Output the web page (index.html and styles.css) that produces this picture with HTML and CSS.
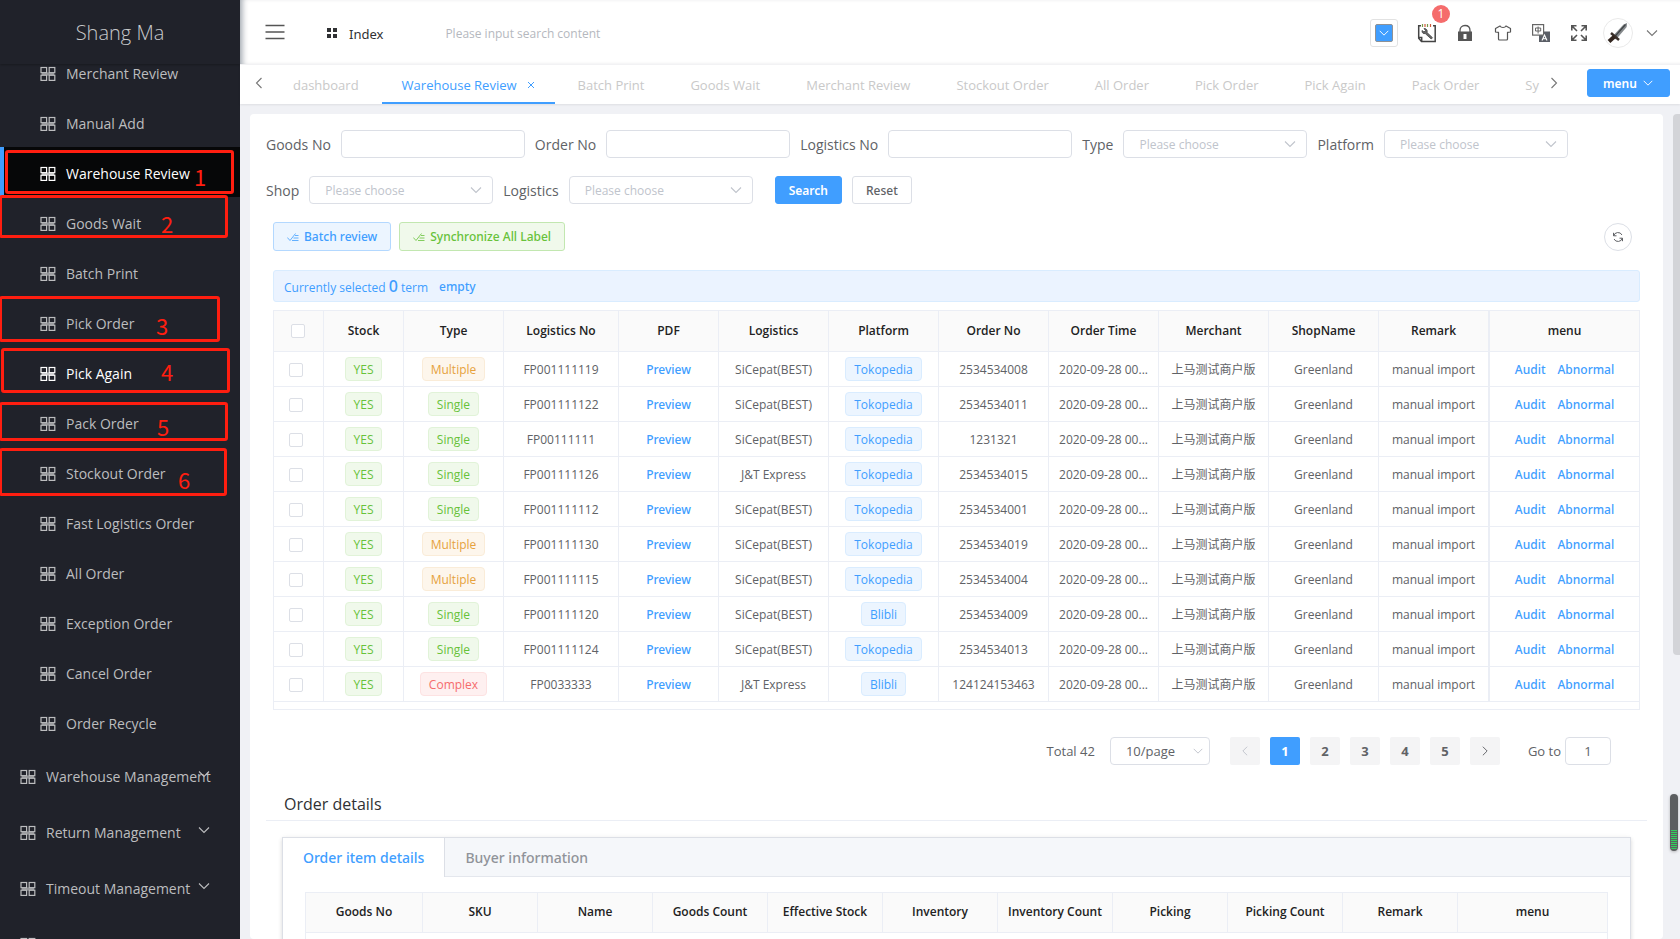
FILE: index.html
```html
<!DOCTYPE html>
<html lang="en">
<head>
<meta charset="utf-8">
<title>Warehouse Review</title>
<link rel="stylesheet" href="styles.css">
</head>
<body>
<svg class="sprite" aria-hidden="true">
  <symbol id="grid" viewBox="0 0 16 16"><g fill="none" stroke="currentColor" stroke-width="1.2"><rect x="1" y="1.5" width="5.6" height="5.2"/><rect x="9.2" y="1.5" width="5.6" height="5.2"/><rect x="1" y="9.2" width="5.6" height="5.2"/><rect x="9.2" y="9.2" width="5.6" height="5.2"/></g><path d="M1.6 6.4h12.600v3.200H1.600z" fill="currentColor" opacity=".7"/></symbol>
  <symbol id="down" viewBox="0 0 14 14"><path d="M2 4.500l5 5 5-5" fill="none" stroke="currentColor" stroke-width="1.100"/></symbol>
  <symbol id="left" viewBox="0 0 14 14"><path d="M9.500 2l-5 5 5 5" fill="none" stroke="currentColor" stroke-width="1.100"/></symbol>
  <symbol id="right" viewBox="0 0 14 14"><path d="M4.500 2l5 5-5 5" fill="none" stroke="currentColor" stroke-width="1.100"/></symbol>
  <symbol id="finished" viewBox="0 0 12 12"><path d="M.3 6.500l2.700 3L8.500 2.500M8 4.500h3.500M6.500 7h5M5 9.500h6.500" fill="none" stroke="currentColor" stroke-width=".8"/></symbol>
</svg>
<div class="app">
  <aside class="sidebar">
    <div class="logo">Shang Ma</div>
    <nav class="menu">
      <a class="item" href="#"><svg><use href="#grid"/></svg>Merchant Review</a>
      <a class="item" href="#"><svg><use href="#grid"/></svg>Manual Add</a>
      <a class="item current" href="#"><svg><use href="#grid"/></svg>Warehouse Review</a>
      <a class="item" href="#"><svg><use href="#grid"/></svg>Goods Wait</a>
      <a class="item" href="#"><svg><use href="#grid"/></svg>Batch Print</a>
      <a class="item" href="#"><svg><use href="#grid"/></svg>Pick Order</a>
      <a class="item hover" href="#"><svg><use href="#grid"/></svg>Pick Again</a>
      <a class="item" href="#"><svg><use href="#grid"/></svg>Pack Order</a>
      <a class="item" href="#"><svg><use href="#grid"/></svg>Stockout Order</a>
      <a class="item" href="#"><svg><use href="#grid"/></svg>Fast Logistics Order</a>
      <a class="item" href="#"><svg><use href="#grid"/></svg>All Order</a>
      <a class="item" href="#"><svg><use href="#grid"/></svg>Exception Order</a>
      <a class="item" href="#"><svg><use href="#grid"/></svg>Cancel Order</a>
      <a class="item" href="#"><svg><use href="#grid"/></svg>Order Recycle</a>
      <a class="item group" href="#"><svg><use href="#grid"/></svg>Warehouse Management<svg class="arrow"><use href="#down"/></svg></a>
      <a class="item group" href="#"><svg><use href="#grid"/></svg>Return Management<svg class="arrow"><use href="#down"/></svg></a>
      <a class="item group" href="#"><svg><use href="#grid"/></svg>Timeout Management<svg class="arrow"><use href="#down"/></svg></a>
      <a class="item group" href="#" aria-label="More"><svg><use href="#grid"/></svg></a>
    </nav>
    <div class="mark mark1"></div><span class="num num1">1</span>
    <div class="mark mark2"></div><span class="num num2">2</span>
    <div class="mark mark3"></div><span class="num num3">3</span>
    <div class="mark mark4"></div><span class="num num4">4</span>
    <div class="mark mark5"></div><span class="num num5">5</span>
    <div class="mark mark6"></div><span class="num num6">6</span>
  </aside>
  <div class="main">
    <header class="topbar">
      <button class="fold" aria-label="Collapse menu"><svg width="20" height="16" viewBox="0 0 20 16"><path d="M.5 1.500h19M.5 8h19M.5 14.500h19" stroke="#555" stroke-width="1.400"/></svg></button>
      <a class="index" href="#"><svg width="12" height="12" viewBox="0 0 12 12"><path d="M1 1h4v4H1zM7 1h4v4H7zM1 7h4v4H1zM7 7h4v4H7z" fill="#303133"/></svg>Index</a>
      <input class="top-search" type="text" placeholder="Please input search content" aria-label="Search content">
      <div class="tools">
        <button class="color" aria-label="Theme colour"><span><svg width="12" height="12"><use href="#down"/></svg></span></button>
        <button class="icon-btn log" aria-label="Debug log"><svg width="20" height="20" viewBox="0 0 20 20" fill="none" stroke="#444" stroke-width="1.500"><path d="M4 2.700H1.700v12.600L4.500 18.500h13.700V2.700H16M1.700 14.500h3v4"/><path d="M5.500 1v3M10.500 1v3" stroke="#7a9a4a" stroke-width="1.200"/><path d="M8 1v3M13.500 1v3" stroke="#d05a3a" stroke-width="1.200"/><path d="M7 5.500l1.500 2-1.500 1.500-2-1.500c-.3 2.500 1.500 3.500 3.200 3l6 5.500 1.300-1.300L10 9.500c.8-2-.5-4.200-3-4z" fill="#666" stroke-width=".8"/></svg><span class="badge">1</span></button>
        <button class="icon-btn" aria-label="Lock screen"><svg width="16" height="18" viewBox="0 0 16 18"><path d="M3 8V6.500C3 3.500 5 1.500 8 1.500s5 2 5 5V8" fill="none" stroke="#555" stroke-width="1.300"/><path fill="#555" fill-rule="evenodd" d="M1 7.500h14V16.500q0 .5-.5.500h-13q-.5 0-.5-.5zM6.500 10v5h3v-5z"/></svg></button>
        <button class="icon-btn" aria-label="Theme"><svg width="18" height="18" viewBox="0 0 18 18"><path d="M6 2L1.500 4.500v3.500l3 .3V15q0 1 1 1h7q1 0 1-1V8.300l3-.3V4.500L12 2q-.8 1.500-3 1.500T6 2z" fill="none" stroke="#555" stroke-width="1.200" stroke-linejoin="round"/></svg></button>
        <button class="icon-btn" aria-label="Language"><svg width="20" height="20" viewBox="0 0 20 20"><rect x="8" y="8.500" width="11" height="10.500" fill="#5a5e66"/><rect x="1.600" y="1.600" width="11" height="10.500" fill="#fff" stroke="#666" stroke-width="1.200"/><path d="M4.500 5h5.200v3H4.500zM7.100 3.500v7" fill="none" stroke="#666"/><path d="M11 17.500l2.500-5.500 2.500 5.500M12 15.800h3" fill="none" stroke="#fff" stroke-width="1.100"/></svg></button>
        <button class="icon-btn" aria-label="Full screen"><svg width="18" height="18" viewBox="0 0 18 18"><path d="M7 7L2 2M1.800 6.500V1.800h4.700M11 7l5-5M11.500 1.800h4.700v4.700M7 11l-5 5M1.800 11.500v4.700h4.700M11 11l5 5M16.200 11.500v4.700h-4.700" fill="none" stroke="#555" stroke-width="1.600"/></svg></button>
        <button class="avatar" aria-label="User"><svg width="28" height="28" viewBox="0 0 28 28"><path d="M8.500 17.500L19.500 5.500l3.500-1.500-.3 4L12 20.500z" fill="#85898c"/><path d="M9.500 19L21.500 5.500" stroke="#3f4345" stroke-width="1.200"/><path d="M7 14l8 7" stroke="#3a302a" stroke-width="2.400"/><path d="M10.500 17.500l-5.500 5" stroke="#33261f" stroke-width="4"/></svg></button>
        <button class="icon-btn" aria-label="User menu"><svg width="14" height="14"><use href="#down"/></svg></button>
      </div>
    </header>
    <div class="tabbar">
      <button class="icon-btn prev" aria-label="Previous tabs"><svg width="14" height="14"><use href="#left"/></svg></button>
      <nav class="tabs">
        <a href="#">dashboard</a>
        <a href="#" class="active">Warehouse Review<svg width="8" height="8" viewBox="0 0 8 8"><path d="M1 1l6 6M7 1L1 7" stroke="currentColor"/></svg></a>
        <a href="#">Batch Print</a>
        <a href="#">Goods Wait</a>
        <a href="#">Merchant Review</a>
        <a href="#">Stockout Order</a>
        <a href="#">All Order</a>
        <a href="#">Pick Order</a>
        <a href="#">Pick Again</a>
        <a href="#">Pack Order</a>
        <a href="#">Sy</a>
      </nav>
      <button class="icon-btn next" aria-label="Next tabs"><svg width="14" height="14"><use href="#right"/></svg></button>
      <button class="btn primary tab-menu">menu<svg width="12" height="12"><use href="#down"/></svg></button>
    </div>
    <div class="content">
      <main class="card">
        <form class="filters">
          <label>Goods No<input type="text"></label>
          <label>Order No<input type="text"></label>
          <label>Logistics No<input type="text"></label>
          <label>Type<span class="select"><select><option>Please choose</option></select><svg><use href="#down"/></svg></span></label>
          <label>Platform<span class="select"><select><option>Please choose</option></select><svg><use href="#down"/></svg></span></label>
          <label>Shop<span class="select"><select><option>Please choose</option></select><svg><use href="#down"/></svg></span></label>
          <label>Logistics<span class="select"><select><option>Please choose</option></select><svg><use href="#down"/></svg></span></label>
          <div class="actions"><button type="button" class="btn primary">Search</button><button type="button" class="btn">Reset</button></div>
        </form>
        <div class="grid-area">
          <div class="toolbar">
            <button class="btn plain-blue"><svg><use href="#finished"/></svg>Batch review</button>
            <button class="btn plain-green"><svg><use href="#finished"/></svg>Synchronize All Label</button>
            <button class="refresh" aria-label="Refresh"><svg width="12" height="12" viewBox="0 0 12 12"><path d="M1.600 5A4.500 4.500 0 0 1 10 4M10.400 7A4.500 4.500 0 0 1 2 8M1.500 1.800v3h3M10.500 10.200v-3h-3" fill="none" stroke="currentColor"/></svg></button>
          </div>
          <div class="tip"><span>Currently selected <b>0</b> term</span><button class="text-btn">empty</button></div>
          <div class="table-box">
          <table class="orders">
            <colgroup><col class="c50"><col class="c80"><col class="c100"><col class="c115"><col class="c100"><col class="c110"><col class="c110"><col class="c110"><col class="c110"><col class="c110"><col class="c110"><col class="c111"><col></colgroup>
            <thead><tr><th><input type="checkbox" aria-label="Select all"></th><th>Stock</th><th>Type</th><th>Logistics No</th><th>PDF</th><th>Logistics</th><th>Platform</th><th>Order No</th><th>Order Time</th><th>Merchant</th><th>ShopName</th><th>Remark</th><th>menu</th></tr></thead>
            <tbody>
              <tr><td><input type="checkbox" aria-label="Select row"></td><td><span class="tag green">YES</span></td><td><span class="tag orange">Multiple</span></td><td>FP001111119</td><td><button class="text-btn">Preview</button></td><td>SiCepat(BEST)</td><td><span class="tag blue">Tokopedia</span></td><td>2534534008</td><td>2020-09-28 00...</td><td>上马测试商户版</td><td>Greenland</td><td>manual import</td><td><button class="text-btn">Audit</button><button class="text-btn">Abnormal</button></td></tr>
              <tr><td><input type="checkbox" aria-label="Select row"></td><td><span class="tag green">YES</span></td><td><span class="tag green">Single</span></td><td>FP001111122</td><td><button class="text-btn">Preview</button></td><td>SiCepat(BEST)</td><td><span class="tag blue">Tokopedia</span></td><td>2534534011</td><td>2020-09-28 00...</td><td>上马测试商户版</td><td>Greenland</td><td>manual import</td><td><button class="text-btn">Audit</button><button class="text-btn">Abnormal</button></td></tr>
              <tr><td><input type="checkbox" aria-label="Select row"></td><td><span class="tag green">YES</span></td><td><span class="tag green">Single</span></td><td>FP00111111</td><td><button class="text-btn">Preview</button></td><td>SiCepat(BEST)</td><td><span class="tag blue">Tokopedia</span></td><td>1231321</td><td>2020-09-28 00...</td><td>上马测试商户版</td><td>Greenland</td><td>manual import</td><td><button class="text-btn">Audit</button><button class="text-btn">Abnormal</button></td></tr>
              <tr><td><input type="checkbox" aria-label="Select row"></td><td><span class="tag green">YES</span></td><td><span class="tag green">Single</span></td><td>FP001111126</td><td><button class="text-btn">Preview</button></td><td>J&amp;T Express</td><td><span class="tag blue">Tokopedia</span></td><td>2534534015</td><td>2020-09-28 00...</td><td>上马测试商户版</td><td>Greenland</td><td>manual import</td><td><button class="text-btn">Audit</button><button class="text-btn">Abnormal</button></td></tr>
              <tr><td><input type="checkbox" aria-label="Select row"></td><td><span class="tag green">YES</span></td><td><span class="tag green">Single</span></td><td>FP001111112</td><td><button class="text-btn">Preview</button></td><td>SiCepat(BEST)</td><td><span class="tag blue">Tokopedia</span></td><td>2534534001</td><td>2020-09-28 00...</td><td>上马测试商户版</td><td>Greenland</td><td>manual import</td><td><button class="text-btn">Audit</button><button class="text-btn">Abnormal</button></td></tr>
              <tr><td><input type="checkbox" aria-label="Select row"></td><td><span class="tag green">YES</span></td><td><span class="tag orange">Multiple</span></td><td>FP001111130</td><td><button class="text-btn">Preview</button></td><td>SiCepat(BEST)</td><td><span class="tag blue">Tokopedia</span></td><td>2534534019</td><td>2020-09-28 00...</td><td>上马测试商户版</td><td>Greenland</td><td>manual import</td><td><button class="text-btn">Audit</button><button class="text-btn">Abnormal</button></td></tr>
              <tr><td><input type="checkbox" aria-label="Select row"></td><td><span class="tag green">YES</span></td><td><span class="tag orange">Multiple</span></td><td>FP001111115</td><td><button class="text-btn">Preview</button></td><td>SiCepat(BEST)</td><td><span class="tag blue">Tokopedia</span></td><td>2534534004</td><td>2020-09-28 00...</td><td>上马测试商户版</td><td>Greenland</td><td>manual import</td><td><button class="text-btn">Audit</button><button class="text-btn">Abnormal</button></td></tr>
              <tr><td><input type="checkbox" aria-label="Select row"></td><td><span class="tag green">YES</span></td><td><span class="tag green">Single</span></td><td>FP001111120</td><td><button class="text-btn">Preview</button></td><td>SiCepat(BEST)</td><td><span class="tag blue">Blibli</span></td><td>2534534009</td><td>2020-09-28 00...</td><td>上马测试商户版</td><td>Greenland</td><td>manual import</td><td><button class="text-btn">Audit</button><button class="text-btn">Abnormal</button></td></tr>
              <tr><td><input type="checkbox" aria-label="Select row"></td><td><span class="tag green">YES</span></td><td><span class="tag green">Single</span></td><td>FP001111124</td><td><button class="text-btn">Preview</button></td><td>SiCepat(BEST)</td><td><span class="tag blue">Tokopedia</span></td><td>2534534013</td><td>2020-09-28 00...</td><td>上马测试商户版</td><td>Greenland</td><td>manual import</td><td><button class="text-btn">Audit</button><button class="text-btn">Abnormal</button></td></tr>
              <tr><td><input type="checkbox" aria-label="Select row"></td><td><span class="tag green">YES</span></td><td><span class="tag red">Complex</span></td><td>FP0033333</td><td><button class="text-btn">Preview</button></td><td>J&amp;T Express</td><td><span class="tag blue">Blibli</span></td><td>124124153463</td><td>2020-09-28 00...</td><td>上马测试商户版</td><td>Greenland</td><td>manual import</td><td><button class="text-btn">Audit</button><button class="text-btn">Abnormal</button></td></tr>
            </tbody>
          </table>
          </div>
          <div class="pager">
            <span>Total 42</span>
            <span class="select size"><select aria-label="Page size"><option>10/page</option></select><svg><use href="#down"/></svg></span>
            <div class="pages">
              <button aria-label="Previous page" disabled><svg width="12" height="12"><use href="#left"/></svg></button>
              <button class="on">1</button><button>2</button><button>3</button><button>4</button><button>5</button>
              <button aria-label="Next page"><svg width="12" height="12"><use href="#right"/></svg></button>
            </div>
            <label class="goto">Go to<input type="text" value="1"></label>
          </div>
        </div>
        <h2 class="section-title">Order details</h2>
        <section class="details">
          <div class="detail-tabs"><button class="on">Order item details</button><button>Buyer information</button></div>
          <div class="detail-body">
            <table class="items">
              <colgroup><col class="c117"><col class="c115"><col class="c115"><col class="c115"><col class="c115"><col class="c115"><col class="c115"><col class="c115"><col class="c115"><col class="c115"><col></colgroup>
              <thead><tr><th>Goods No</th><th>SKU</th><th>Name</th><th>Goods Count</th><th>Effective Stock</th><th>Inventory</th><th>Inventory Count</th><th>Picking</th><th>Picking Count</th><th>Remark</th><th>menu</th></tr></thead>
              <tbody><tr><td colspan="11"></td></tr></tbody>
            </table>
          </div>
        </section>
      </main>
      <div class="scroll-thumb"></div>
      <div class="gauge"><span></span></div>
    </div>
  </div>
</div>
</body>
</html>
```
FILE: styles.css
```css
* { box-sizing: border-box; }
body {
  margin: 0;
  font-family: "Open Sans", "Noto Sans CJK SC", sans-serif;
  font-size: 14px;
  color: #606266;
  background: #f0f1f5;
}
a { color: inherit; text-decoration: none; }
button, input, select { font: inherit; color: inherit; }
button { padding: 0; border: 0; background: none; }
svg { flex: none; display: block; }
.sprite { position: absolute; width: 0; height: 0; }

.app { display: flex; height: 100vh; overflow: hidden; }

/* sidebar */
.sidebar {
  position: relative;
  flex: none;
  width: 240px;
  background: #20222a;
  color: #bcbdbf;
  overflow: hidden;
}
.logo {
  position: relative;
  z-index: 1;
  height: 64px;
  line-height: 66px;
  text-align: center;
  font-size: 20px;
  font-weight: 300;
  color: #c7c8ca;
  background: #20222a;
  box-shadow: 0 1px 2px rgba(0, 0, 0, .25);
}
.menu { margin-top: -17px; }
.item {
  position: relative;
  display: flex;
  align-items: center;
  gap: 10px;
  height: 50px;
  padding: 3px 0 0 40px;
  white-space: nowrap;
}
.item svg { width: 16px; height: 16px; }
.item.group { height: 56px; padding-left: 20px; }
.item .arrow { position: absolute; right: 29px; top: 20px; width: 14px; height: 14px; }
.item.current { background: #060708; color: #fff; border-left: 4px solid #409eff; padding-left: 36px; }
.item.hover { color: #fff; }

/* numbered callouts over the menu */
.mark { position: absolute; z-index: 2; border: 3px solid #ff1e10; border-radius: 3px; }
.mark1 { left: 5px; top: 150px; width: 229px; height: 44px; }
.mark2 { left: -1px; top: 195px; width: 229px; height: 43px; }
.mark3 { left: -1px; top: 296px; width: 221px; height: 46px; }
.mark4 { left: 1px; top: 348px; width: 229px; height: 45px; }
.mark5 { left: -1px; top: 402px; width: 229px; height: 39px; }
.mark6 { left: -1px; top: 448px; width: 228px; height: 48px; }
.num { position: absolute; z-index: 2; font: 22px/22px "Noto Sans CJK SC", sans-serif; color: #ff1e10; }
.num1 { left: 194px; top: 165px; }
.num2 { left: 161px; top: 212px; }
.num3 { left: 156px; top: 314px; }
.num4 { left: 161px; top: 360px; }
.num5 { left: 157px; top: 415px; }
.num6 { left: 178px; top: 468px; }

/* top bar */
.main { flex: 1; min-width: 0; display: flex; flex-direction: column; }
.topbar {
  flex: none;
  display: flex;
  align-items: center;
  height: 64px;
  padding: 0 9px 0 25px;
  background: #fff;
  box-shadow: inset 6px 0 6px -4px rgba(0, 21, 41, .4);
}
.icon-btn { display: flex; align-items: center; justify-content: center; width: 38px; color: #777; }
.index { display: flex; align-items: center; gap: 11px; margin-left: 41px; padding-top: 3px; color: #303133; font-family: "Noto Sans", sans-serif; font-size: 13px; }
.index svg { margin-bottom: 2px; }
.top-search { flex: 1; margin-left: 58px; padding: 5px 4px 3px; border: 0; outline: 0; font-size: 12px; background: none; }
.top-search::placeholder { color: #b5b8be; opacity: 1; }
.tools { display: flex; align-items: center; padding-top: 2px; }
.color { width: 28px; height: 28px; margin-right: 10px; padding: 4px; border: 1px solid #e2e2e2; border-radius: 3px; }
.color span { display: flex; align-items: center; justify-content: center; height: 18px; border: 1px solid #8f9296; border-radius: 2px; background: #409eff; color: #fff; }
.log { position: relative; }
.badge {
  position: absolute;
  left: 24px;
  top: -18px;
  width: 18px;
  height: 18px;
  border-radius: 9px;
  font-size: 12px;
  line-height: 18px;
  background: #f56c6c;
  color: #fff;
}
.avatar { width: 30px; height: 30px; margin-left: 5px; border: 1px solid #eaeaea; border-radius: 15px; overflow: hidden; }

/* page tabs */
.tabbar {
  flex: none;
  position: relative;
  z-index: 1;
  display: flex;
  height: 40px;
  padding-right: 10px;
  background: #fff;
  border-top: 1px solid #f2f2f4;
  box-shadow: 0 1px 2px rgba(0, 0, 0, .08);
}
.prev { width: 28px; padding: 0 0 4px 10px; }
.next { width: 18px; padding-bottom: 4px; }
.tabs { flex: 1; display: flex; min-width: 0; padding-left: 2px; overflow: hidden; font-size: 13px; color: #c9c9c9; }
.tabs a { flex: none; display: flex; align-items: center; padding: 1px 23px 0; white-space: nowrap; }
.tabs a:last-child { padding-right: 0; }
.tabs a.active { gap: 10px; padding: 3px 20px 0; color: #409eff; border-bottom: 2px solid #409eff; }
.tab-menu { margin: 4px 0 6px 24px; width: 83px; height: 29px; font-weight: 700; gap: 8px; }

/* content card */
.content { flex: 1; min-height: 0; position: relative; padding: 10px 17px 0 10px; }
.card { height: 100%; overflow: hidden; padding: 16px 16px 0; background: #fff; border-radius: 4px; }
.scroll-thumb { position: absolute; right: 0; top: 10px; width: 7px; height: 541px; border-radius: 4px 0 0 4px; background: #d3d4d8; }
.gauge { position: absolute; right: 2px; top: 690px; display: flex; align-items: flex-end; width: 8px; height: 57px; padding: 1px; border-radius: 4px; background: #5c5e60; box-shadow: 0 1px 3px rgba(0, 0, 0, .25); }
.gauge span { width: 100%; height: 20px; border-radius: 0 0 3px 3px; background: repeating-linear-gradient(#2fd15c 0 1px, #5c5e60 1px 2px); }

.filters { display: flex; flex-wrap: wrap; gap: 18px 10px; }
.filters label { display: flex; align-items: center; gap: 10px; white-space: nowrap; }
.filters input, .filters .select { width: 184px; }
.filters input, .select select, .goto input {
  height: 28px;
  padding: 0 15px;
  border: 1px solid #dcdfe6;
  border-radius: 4px;
  background: #fff;
  outline: 0;
}
.select { position: relative; display: block; }
.select select { width: 100%; appearance: none; font-size: 12px; color: #c0c4cc; }
.select svg { position: absolute; right: 10px; top: 7px; width: 14px; height: 14px; color: #c0c4cc; pointer-events: none; }
.actions { display: flex; gap: 10px; margin-left: 12px; }
.btn {
  display: flex;
  align-items: center;
  justify-content: center;
  gap: 5px;
  height: 28px;
  padding: 0 13px;
  border: 1px solid #dcdfe6;
  border-radius: 3px;
  font-family: "Noto Sans", sans-serif;
  font-size: 12px;
  font-weight: 500;
  white-space: nowrap;
  background: #fff;
}
.btn svg { width: 12px; height: 12px; }
.primary { background: #409eff; border-color: #409eff; color: #fff; font-weight: 600; }
.plain-blue { background: #ecf5ff; border-color: #b3d8ff; color: #409eff; }
.plain-green { background: #f0f9eb; border-color: #c2e7b0; color: #67c23a; }

.grid-area { padding: 18px 7px 0; }
.toolbar { display: flex; align-items: center; gap: 8px; }
.toolbar .btn { height: 29px; }
.refresh { display: flex; align-items: center; justify-content: center; width: 28px; height: 28px; margin: 0 8px 0 auto; border: 1px solid #dcdfe6; border-radius: 14px; }
.tip { display: flex; align-items: center; gap: 11px; height: 32px; margin: 19px 0 8px; padding: 0 10px; border: 1px solid #d9ecff; border-radius: 3px; background: #ebf3ff; color: #409eff; font-size: 12px; }
.tip b { font-family: "Noto Sans", sans-serif; font-size: 16px; font-weight: 500; }
.text-btn { font-family: "Noto Sans", sans-serif; font-size: 12px; font-weight: 500; color: #409eff; }
.text-btn + .text-btn { margin-left: 12px; }

/* tables */
.table-box { border: 1px solid #ebeef5; padding-bottom: 7px; }
table { width: 100%; table-layout: fixed; border-collapse: separate; border-spacing: 0; font-size: 12px; text-align: center; }
.c50 { width: 50px; }
.c80 { width: 80px; }
.c100 { width: 100px; }
.c110 { width: 110px; }
.c111 { width: 111px; }
.c115 { width: 115px; }
.c117 { width: 117px; }
th, td { padding: 0; border: 0 solid #ebeef5; border-width: 0 1px 1px 0; white-space: nowrap; overflow: hidden; }
th:last-child, td:last-child { border-right: 0; }
th { height: 41px; padding-bottom: 2px; background: #fafafa; color: #222; font-weight: 600; }
td { height: 35px; vertical-align: middle; }
.orders th:nth-last-child(2), .orders td:nth-last-child(2) { border-right-width: 2px; }
input[type="checkbox"] { appearance: none; display: block; width: 14px; height: 14px; margin: 2px auto 0 15px; border: 1px solid #dcdfe6; border-radius: 2px; background: #fff; }
th input[type="checkbox"] { margin-left: 17px; }
.tag { display: inline-block; height: 24px; padding: 0 8px; border: 1px solid; border-radius: 4px; line-height: 23px; vertical-align: middle; }
.green { color: #67c23a; background: #f0f9eb; border-color: #e1f3d8; }
.orange { color: #e6a23c; background: #fdf6ec; border-color: #faecd8; }
.blue { color: #409eff; background: #ecf5ff; border-color: #d9ecff; }
.red { color: #f56c6c; background: #fef0f0; border-color: #fde2e2; }

/* pagination */
.pager { display: flex; justify-content: flex-end; align-items: center; margin-top: 27px; padding-right: 29px; font-size: 13px; }
.size { width: 100px; margin: 0 20px 0 15px; }
.size select { font-size: 13px; color: #606266; }
.size svg { width: 12px; top: 7px; right: 6px; }
.pages { display: flex; gap: 10px; }
.pages button { display: flex; align-items: center; justify-content: center; width: 30px; height: 28px; border-radius: 2px; background: #f4f4f5; font-weight: 700; }
.pages button:disabled { color: #c0c4cc; }
.pages .on { background: #409eff; color: #fff; }
.goto { display: flex; align-items: center; gap: 4px; margin-left: 28px; }
.goto input { width: 46px; padding: 0; text-align: center; }

/* order details */
.section-title { margin: 25px 0 16px; padding: 0 18px; height: 31px; line-height: 28px; border-bottom: 1px solid #ebeef5; font-size: 16px; font-weight: 400; color: #303133; }
.details { margin: 0 16px; border: 1px solid #dcdfe6; box-shadow: 0 2px 4px rgba(0, 0, 0, .12), 0 0 6px rgba(0, 0, 0, .04); background: #fff; }
.detail-tabs { display: flex; height: 39px; background: #f5f7fa; border-bottom: 1px solid #e4e7ed; }
.detail-tabs button { padding: 0 20px; font-family: "Noto Sans", sans-serif; font-weight: 500; color: #909399; }
.detail-tabs .on { height: 39px; background: #fff; color: #409eff; border-right: 1px solid #dcdfe6; }
.detail-body { padding: 15px 22px; }
.items { border: 1px solid #ebeef5; }
.items th { height: 40px; }
```
